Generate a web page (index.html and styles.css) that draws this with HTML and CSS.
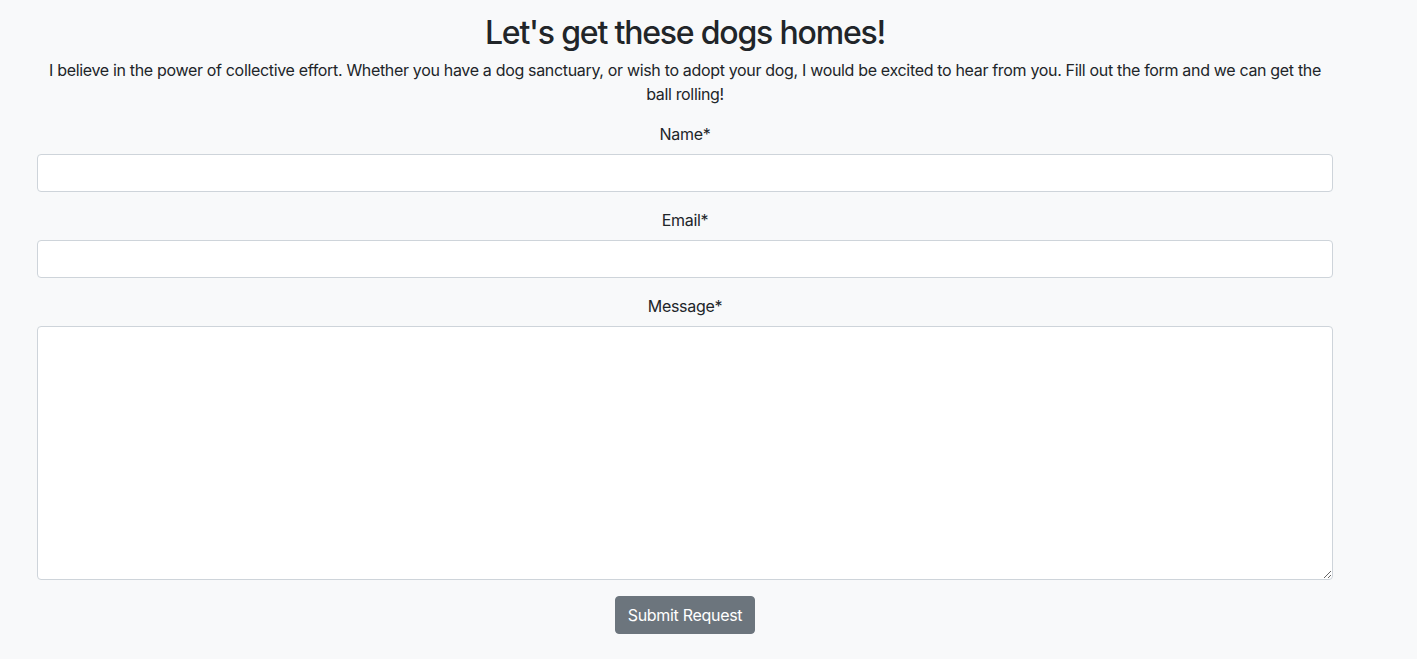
FILE: index.html
```html
<!DOCTYPE html>
<html lang="en">
<head>
<meta charset="utf-8">
<title>Let's get these dogs homes!</title>
<link rel="stylesheet" href="styles.css">
</head>
<body>
<main class="container">
  <h2 class="title">Let's get these dogs homes!</h2>
  <p class="intro">I believe in the power of collective effort. Whether you have a dog sanctuary, or wish to adopt your dog, I would be excited to hear from you. Fill out the form and we can get the ball rolling!</p>
  <form class="form">
    <div class="group">
      <label class="label" for="name">Name*</label>
      <input class="control" id="name" type="text">
    </div>
    <div class="group">
      <label class="label" for="email">Email*</label>
      <input class="control" id="email" type="email">
    </div>
    <div class="group">
      <label class="label" for="message">Message*</label>
      <textarea class="control textarea" id="message"></textarea>
    </div>
    <div class="actions">
      <button class="btn" type="button">Submit Request</button>
    </div>
  </form>
</main>
</body>
</html>
```

FILE: styles.css
```css
* { box-sizing: border-box; }
html, body { margin: 0; padding: 0; }
body {
  background: #f8f9fa;
  color: #212529;
  font-family: Inter, "Noto Sans", "Liberation Sans", sans-serif;
  font-size: 16px;
  line-height: 1.5;
  letter-spacing: -0.3px;
}
.container {
  width: 1296px;
  margin-left: 37px;
  padding-top: 14px;
  text-align: center;
}
.title {
  margin: 0 0 6px;
  font-size: 32px;
  font-weight: 500;
  line-height: 1.2;
  letter-spacing: -1.2px;
}
.intro {
  margin: 0 0 16px;
  letter-spacing: -0.33px;
}
.group {
  margin-bottom: 16px;
}
.label {
  display: block;
  margin-bottom: 8px;
}
.control {
  display: block;
  width: 100%;
  height: 38px;
  padding: 6px 12px;
  font: inherit;
  letter-spacing: inherit;
  color: #212529;
  background: #fff;
  border: 1px solid #ced4da;
  border-radius: 4px;
}
.textarea {
  height: 254px;
  resize: vertical;
}
.actions {
  display: flex;
  justify-content: center;
}
.btn {
  font: inherit;
  letter-spacing: inherit;
  color: #fff;
  background: #6c757d;
  border: 1px solid #6c757d;
  border-radius: 4px;
  padding: 6px 12px;
  line-height: 24px;
  cursor: pointer;
}
```
